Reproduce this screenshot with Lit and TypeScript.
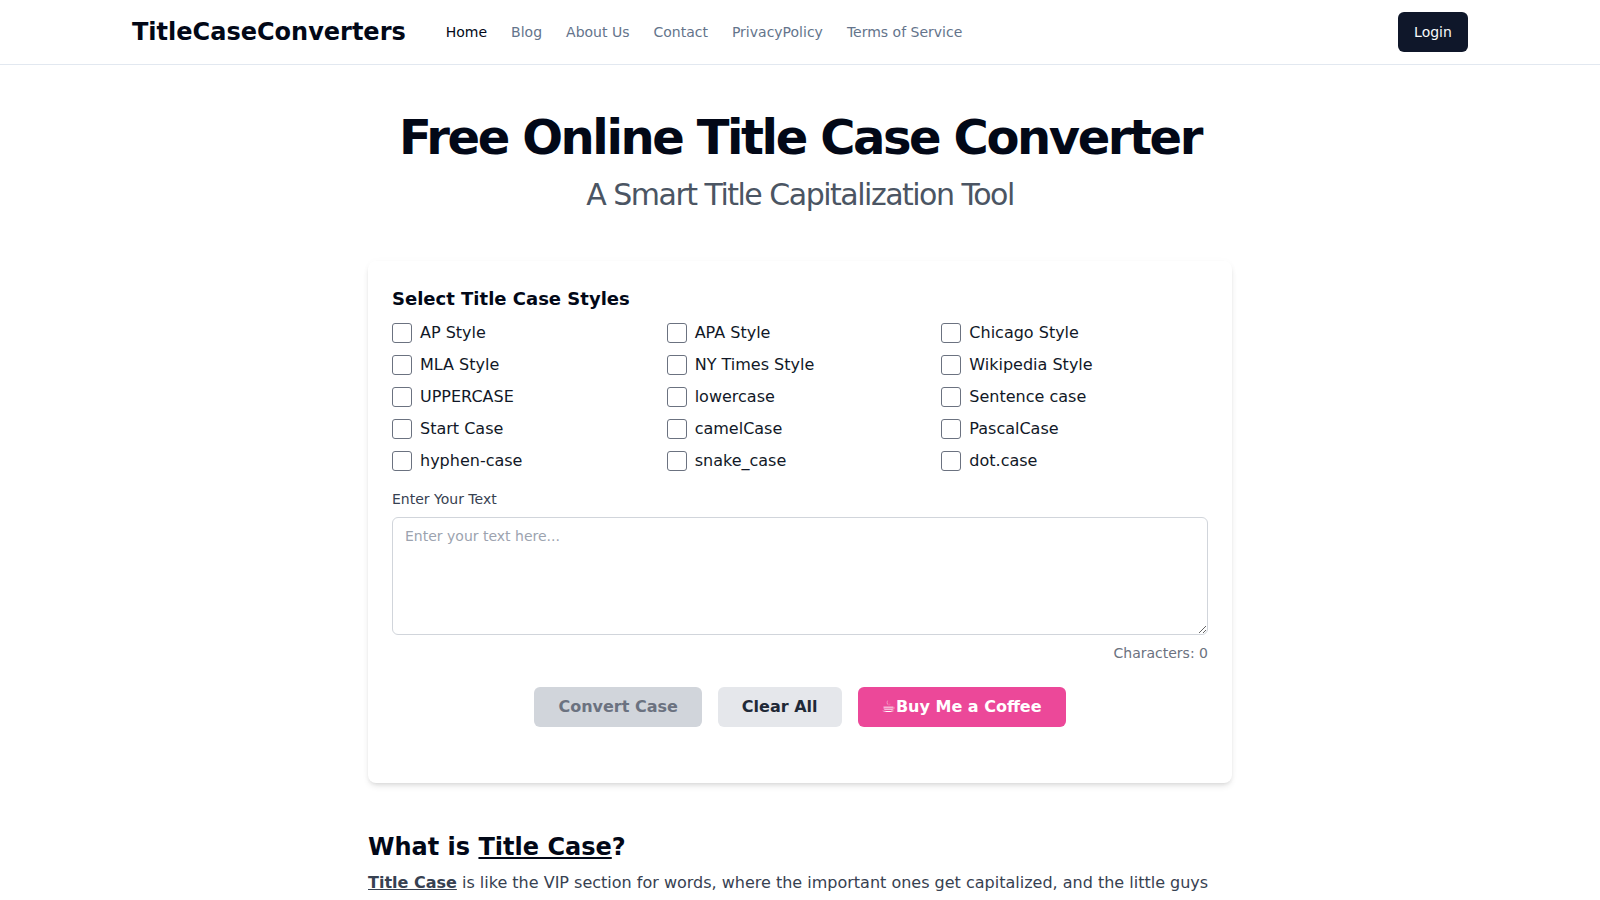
import { LitElement, html, css } from "lit";
import { customElement } from "lit/decorators.js";

const STYLES = [
  "AP Style", "APA Style", "Chicago Style",
  "MLA Style", "NY Times Style", "Wikipedia Style",
  "UPPERCASE", "lowercase", "Sentence case",
  "Start Case", "camelCase", "PascalCase",
  "hyphen-case", "snake_case", "dot.case",
];
const NAV = ["Blog", "About Us", "Contact", "PrivacyPolicy", "Terms of Service"];

@customElement("app-root")
export class AppRoot extends LitElement {
  static styles = css`
    :host { display: block; font-family: "DejaVu Sans", sans-serif; color: #020817; background: #fff; }
    * { box-sizing: border-box; }
    a { color: inherit; text-decoration: none; }
    .header { height: 65px; border-bottom: 1px solid #e2e8f0; }
    .bar { max-width: 1400px; height: 64px; margin: 0 auto; padding: 0 32px; display: flex; align-items: center; }
    .logo { font-size: 24px; line-height: 32px; font-weight: 700; color: #020817; margin-right: 40px; }
    .nav { display: flex; gap: 24px; font-size: 14px; line-height: 20px; color: #64748b; }
    .nav .active { color: #020817; }
    .login { margin-left: auto; height: 40px; width: 70px; border: 0; border-radius: 6px; background: #0f172a; color: #f8fafc; font: inherit; font-size: 14px; line-height: 20px; }
    .main { max-width: 896px; margin: 0 auto; padding: 0 16px; }
    .hero { padding: 48px 0; text-align: center; }
    h1 { margin: 0 0 16px; font-size: 48px; line-height: 48px; font-weight: 700; letter-spacing: -0.05em; color: #020817; }
    .sub { margin: 0; font-size: 30px; line-height: 36px; letter-spacing: -0.05em; color: #4b5563; }
    .card { border-radius: 8px; padding: 24px 24px 56px; background: #fff; box-shadow: 0 4px 6px -1px rgba(0,0,0,.1), 0 2px 4px -2px rgba(0,0,0,.1), 0 0 8px rgba(0,0,0,.02); }
    h3 { margin: 0 0 8px; font-size: 18px; line-height: 28px; font-weight: 700; color: #020817; }
    .grid { display: grid; grid-template-columns: repeat(3, 1fr); gap: 8px; }
    .opt { display: flex; align-items: center; gap: 8px; font-size: 16px; line-height: 24px; color: #111827; }
    .opt input { appearance: none; margin: 0; width: 20px; height: 20px; border: 1px solid #6b7280; border-radius: 3px; background: #fff; flex: none; }
    .lab { display: block; margin: 16px 0 8px; font-size: 14px; line-height: 20px; color: #374151; }
    textarea { display: block; width: 100%; padding: 8px 12px; border: 1px solid #d1d5db; border-radius: 6px; font: inherit; font-size: 14px; line-height: 20px; color: #111827; background: #fff; outline: none; }
    textarea::placeholder { color: #9ca3af; }
    .count { margin-top: 8px; text-align: right; font-size: 14px; line-height: 20px; color: #6b7280; }
    .btns { display: flex; justify-content: center; gap: 16px; margin-top: 24px; }
    .btn { height: 40px; padding: 8px 24px; border: 0; border-radius: 6px; font: inherit; font-size: 16px; line-height: 24px; font-weight: 700; }
    .convert { background: #d1d5db; color: #6b7280; }
    .clear { background: #e5e7eb; color: #1f2937; }
    .coffee { background: #ec4899; color: #fff; }
    .info { padding-top: 48px; }
    h2 { margin: 0 0 8px; font-size: 24px; line-height: 32px; font-weight: 700; color: #020817; }
    h2 a, .info p a { text-decoration: underline; }
    .info p { margin: 0; font-size: 16px; line-height: 24px; color: #374151; }
    .info p a { font-weight: 700; }
  `;

  render() {
    return html`
      <header class="header">
        <div class="bar">
          <a class="logo" href="#">TitleCaseConverters</a>
          <nav class="nav">
            <a class="active" href="#">Home</a>
            ${NAV.map((n) => html`<a href="#">${n}</a>`)}
          </nav>
          <button class="login">Login</button>
        </div>
      </header>
      <main class="main">
        <section class="hero">
          <h1>Free Online Title Case Converter</h1>
          <p class="sub">A Smart Title Capitalization Tool</p>
        </section>
        <section class="card">
          <h3>Select Title Case Styles</h3>
          <div class="grid">
            ${STYLES.map((s) => html`<label class="opt"><input type="checkbox" /><span>${s}</span></label>`)}
          </div>
          <label class="lab" for="t">Enter Your Text</label>
          <textarea id="t" rows="5" placeholder="Enter your text here..."></textarea>
          <div class="count">Characters: 0</div>
          <div class="btns">
            <button class="btn convert">Convert Case</button>
            <button class="btn clear">Clear All</button>
            <button class="btn coffee">☕Buy Me a Coffee</button>
          </div>
        </section>
        <section class="info">
          <h2>What is <a href="#">Title Case</a>?</h2>
          <p><a href="#">Title Case</a> is like the VIP section for words, where the important ones get capitalized, and the little guys</p>
        </section>
      </main>
    `;
  }
}
